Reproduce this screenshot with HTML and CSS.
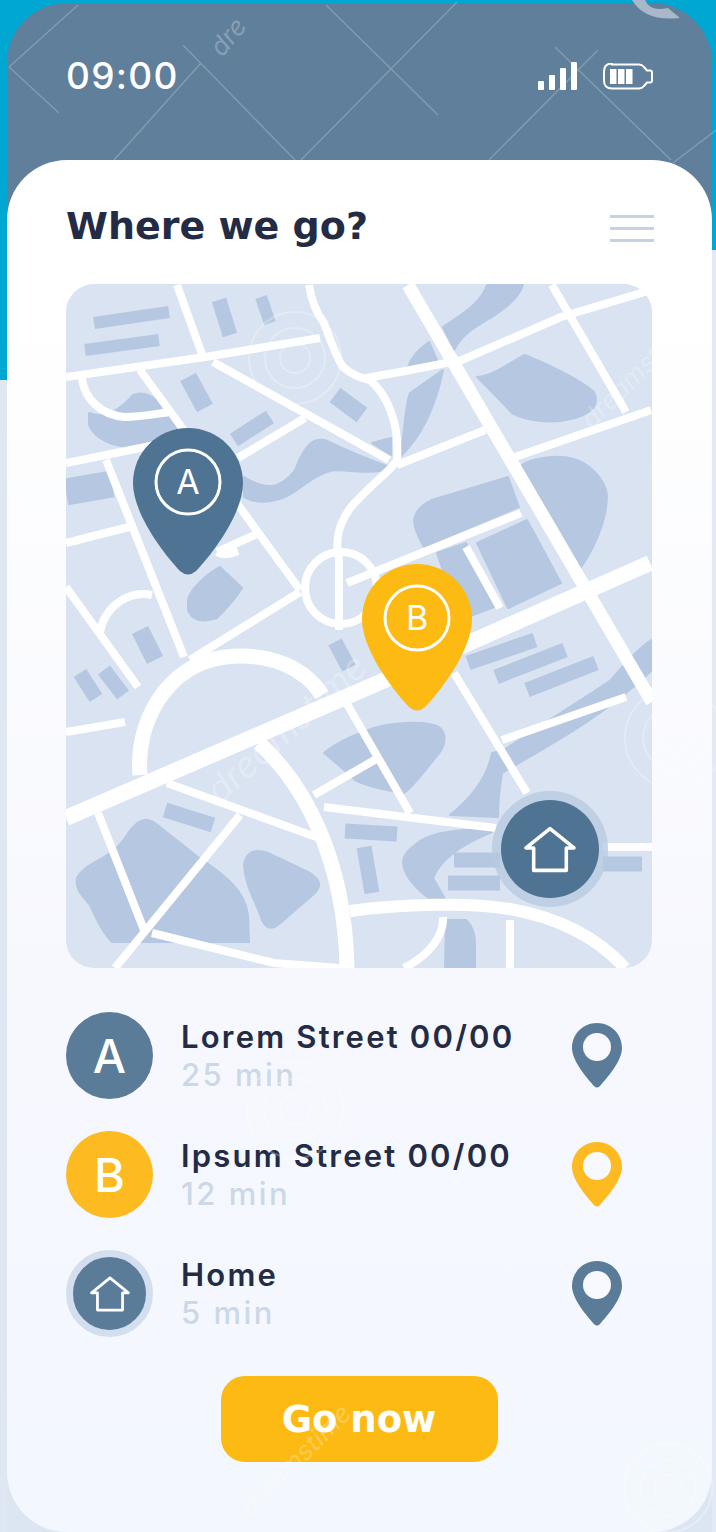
FILE: index.html
```html
<!DOCTYPE html>
<html lang="en">
<head>
    <meta charset="UTF-8">
    <meta name="viewport" content="width=device-width, initial-scale=1.0">
    <title>Where we go?</title>
    <link rel="stylesheet" href="styles.css">
</head>
<body>
    <svg class="sprites" width="0" height="0">
        <symbol id="house" viewBox="0 0 51 45">
            <path d="M25.500 2 2 21h7.500v22h32V21H49z" fill="none" stroke="#fff" stroke-width="3.500" stroke-linejoin="round"/>
        </symbol>
        <symbol id="small-pin" viewBox="0 0 50 65">
            <path d="M25 0C39 0 50 11 50 25 50 38 35 55 28 63Q25 66 22 63C15 55 0 38 0 25 0 11 11 0 25 0z"/>
            <circle cx="25" cy="24" r="14" fill="#f8f9fe"/>
        </symbol>
    </svg>

    <div class="phone">
        <div class="status-bar">
            <span class="time">09:00</span>
            <div class="status-icons">
                <div class="signal">
                    <span class="bar-1"></span>
                    <span class="bar-2"></span>
                    <span class="bar-3"></span>
                    <span class="bar-4"></span>
                </div>
                <svg class="battery" viewBox="0 0 50 27" width="50" height="27">
                    <path d="M9 1.500h27q3 0 5 2.500l3 3.500h3q2 0 2 2v8q0 2-2 2h-3l-3 3.500q-2 2.500-5 2.500H9q-8 0-8-8v-9q0-8 8-8z" fill="none" stroke="#fff" stroke-width="2"/>
                    <path d="M7 6h6.500v15H7zM15 6h6.500v15H15zM23 6h6.500v15H23z" fill="#fff"/>
                </svg>
            </div>
        </div>

        <div class="card">
            <div class="card-header">
                <h1>Where we go?</h1>
                <div class="menu-icon"><span></span><span></span><span></span></div>
            </div>

            <div class="map">
                <svg viewBox="66 284 586 684" width="586" height="684">
                    <g class="shapes">
                        <path d="M89 413C105 420 120 410 133 395 145 390 155 398 160 405L178 428C170 440 150 442 132 447 115 447 95 440 89 425z"/>
                        <path d="M244 477C265 490 280 490 295 470 305 445 312 438 325 440 345 450 370 460 392 468 370 475 350 470 335 470 315 473 300 490 285 497 270 503 255 503 244 497z"/>
                        <path d="M487 285H523C520 295 510 305 495 315 480 325 465 330 454 350L443 327C460 315 480 305 487 285z"/>
                        <path d="M408 367C412 355 420 348 429 342L437 360zM443 370C438 395 428 430 400 457 405 430 405 405 410 393z"/>
                        <path d="M372 443 391 438V455z"/>
                        <path d="M477 377C495 375 510 362 525 355 550 365 580 380 594 392 600 405 592 413 575 418 550 425 525 420 512 413 500 400 490 390 477 377z"/>
                        <path d="M414 520C416 510 422 505 432 500L508 477 519 507 424 547C420 540 414 530 414 520z"/>
                        <path d="M519 467C530 458 555 455 570 458 590 462 605 480 607 495 607 525 590 555 577 573z"/>
                        <path d="M477 543 527 520 561 583 508 608z"/>
                        <path d="M437 553 466 543 494 607 460 620z"/>
                        <path d="M188 600C190 590 205 575 220 567L242 588C235 600 225 610 217 618 205 622 192 622 188 610z"/>
                        <path d="M651 640C630 655 620 670 611 680 590 695 540 725 504 750L492 753C488 775 475 795 450 815L498 817C498 800 500 785 502 773 540 750 600 720 652 670z"/>
                        <path d="M492 832C470 828 430 830 415 845 400 855 400 865 410 880 418 890 425 897 432 899H445L433 878C440 860 460 845 492 832z"/>
                        <path d="M324 753C340 740 360 733 374 728 395 722 430 720 440 728 447 735 445 745 440 752 425 770 415 785 404 793 385 790 365 785 355 780 345 770 335 762 324 753z"/>
                        <path d="M77 878C85 862 110 860 125 838 135 822 145 815 155 823L198 857C225 875 245 890 248 915L249 942H112C100 930 95 915 90 905 82 895 75 890 77 878z"/>
                        <path d="M244 865C246 852 255 848 268 853L310 873C320 880 322 885 315 893L278 925C272 930 265 928 262 920 255 900 245 885 244 865z"/>
                        <path d="M446 920H466C472 925 475 932 475 945V968H445z"/>
                    </g>
                    <g class="lanes">
                        <path stroke-width="12" d="M94 323 169 312M85 350 159 340M261 297 270 323"/>
                        <path stroke-width="15" d="M219 300 230 335M234 440 270 417M80 673 96 698M104 670 123 695M335 642 349 668M468 663 535 640M496 677 565 650M527 690 596 663M165 810 213 825M345 831 397 834M364 847 372 893M454 860H500M448 883H500M603 864H642"/>
                        <path stroke-width="18" d="M188 377 205 408M335 395 362 415M140 630 155 660"/>
                        <path stroke-width="27" d="M66 492 112 484"/>
                    </g>
                    <g class="roads">
                        <g stroke-width="8">
                            <path d="M66 377 205 357 320 338"/>
                            <path d="M177 285 203 357M552 285 626 412M213 362 389 460M140 370 300 590M106 460 184 657"/>
                            <path d="M309 285C312 305 318 315 324 323 332 345 338 360 343 367 352 375 360 378 370 380 385 393 400 420 397 460 392 470 370 485 351 507 338 525 335 540 339 560V630"/>
                            <path d="M651 290 561 317 462 360 400 372 366 378"/>
                            <path d="M397 465 485 430M515 457 651 410M66 463 170 442M238 458 305 418"/>
                            <path d="M347 583 521 513M466 547 500 608M66 543 129 527M217 552 259 533M66 587 138 687M300 592 190 660"/>
                            <path d="M82 378C84 398 100 415 125 417 140 417 155 414 170 412"/>
                            <path d="M100 632C105 605 130 590 152 595"/>
                            <path d="M217 552C224 556 230 554 238 551"/>
                            <circle cx="341" cy="588" r="36"/>
                            <path d="M66 732 125 722M167 783 316 837M324 807 496 828M603 847H652M98 813 144 930M240 815 115 968M152 933 274 963 340 968M343 697 410 813M314 795 378 758M454 673 527 793M502 740 626 697M510 920V968M443 917C444 935 430 955 404 968"/>
                        </g>
                        <path stroke-width="13" d="M408 285 652 702"/>
                        <path stroke-width="16" d="M66 818 385 680 650 563"/>
                        <path stroke-width="15" d="M140 775C135 725 165 665 225 657 270 652 305 668 322 695"/>
                        <path stroke-width="15" d="M259 743C305 785 345 860 347 968"/>
                        <path stroke-width="12" d="M350 911C400 904 470 902 510 909 555 917 595 935 625 968"/>
                    </g>
                    <g class="map-pin">
                        <path fill="#4f7393" d="M188 428C218 428 243 452 243 483 243 512 215 551 196 571Q188 578 180 571C161 551 133 512 133 483 133 452 158 428 188 428z"/>
                        <circle cx="188" cy="482" r="32"/>
                        <text x="188" y="494">A</text>
                    </g>
                    <g class="map-pin" transform="translate(229 136)">
                        <path fill="#fdba13" d="M188 428C218 428 243 452 243 483 243 512 215 551 196 571Q188 578 180 571C161 551 133 512 133 483 133 452 158 428 188 428z"/>
                        <circle cx="188" cy="482" r="32"/>
                        <text x="188" y="494">B</text>
                    </g>
                    <circle cx="550" cy="849" r="58" fill="#b8c9e0" opacity=".8"/>
                    <circle cx="550" cy="849" r="49" fill="#4f7393"/>
                    <use href="#house" x="524" y="826" width="52" height="47"/>
                </svg>
            </div>

            <div class="stops">
                <div class="stop">
                    <div class="badge badge-slate">A</div>
                    <div class="stop-text">
                        <div class="stop-name">Lorem Street 00/00</div>
                        <div class="stop-time">25 min</div>
                    </div>
                    <svg class="stop-pin pin-slate" width="50" height="65"><use href="#small-pin"/></svg>
                </div>
                <div class="stop">
                    <div class="badge badge-yellow">B</div>
                    <div class="stop-text">
                        <div class="stop-name">Ipsum Street 00/00</div>
                        <div class="stop-time">12 min</div>
                    </div>
                    <svg class="stop-pin pin-yellow" width="50" height="65"><use href="#small-pin"/></svg>
                </div>
                <div class="stop">
                    <div class="badge badge-home">
                        <svg width="40" height="40"><use href="#house"/></svg>
                    </div>
                    <div class="stop-text">
                        <div class="stop-name">Home</div>
                        <div class="stop-time">5 min</div>
                    </div>
                    <svg class="stop-pin pin-slate" width="50" height="65"><use href="#small-pin"/></svg>
                </div>
            </div>

            <button class="go-button">Go now</button>
        </div>
    </div>

    <!-- stock photo watermark that sits over the whole shot -->
    <svg class="watermark" viewBox="0 0 716 1532" width="716" height="1532">
        <g class="wm-lines">
            <path d="M9 67 59 113M78 5 9 67M183 45 295 160M114 160 201 63M326 5 438 115M301 160 457 2M555 47 671 160M489 160 598 50M673 163 716 130"/>
        </g>
        <path d="M632 0Q645 22 680 18L668 8Q650 12 645 0z" fill="#a9b8c8"/>
        <g class="wm-spiral">
            <circle cx="295" cy="358" r="46"/><circle cx="295" cy="358" r="30"/><circle cx="295" cy="358" r="15"/>
            <circle cx="295" cy="1110" r="48"/><circle cx="295" cy="1110" r="31"/><circle cx="295" cy="1110" r="15"/>
            <circle cx="675" cy="738" r="50"/><circle cx="675" cy="738" r="32"/><circle cx="675" cy="738" r="15"/>
            <circle cx="668" cy="1488" r="44"/><circle cx="668" cy="1488" r="28"/><circle cx="668" cy="1488" r="13"/>
        </g>
        <text class="wm-text wm-small" transform="translate(222 58) rotate(-50)">dre</text>
        <text class="wm-text" transform="translate(220 805) rotate(-42)">dreamstime</text>
        <text class="wm-text wm-small" transform="translate(592 430) rotate(-45)">dreamstime</text>
        <text class="wm-text wm-small" transform="translate(250 1518) rotate(-45)">dreamstime</text>
    </svg>
</body>
</html>
```

FILE: styles.css
```css
* {
    box-sizing: border-box;
}

body {
    position: relative;
    margin: 0;
    width: 716px;
    height: 1532px;
    overflow: hidden;
    font-family: Inter, "Liberation Sans", sans-serif;
    background:
        linear-gradient(#00a7d2 380px, #dfe7f3 380px) left / 50% 100% no-repeat,
        linear-gradient(#00a7d2 250px, #e3e9f5 250px) right / 50% 100% no-repeat;
}

.sprites {
    display: block;
}

.phone {
    margin: 3px 4px 0 7px;
    height: 1529px;
    border-radius: 60px 60px 0 0;
    background: linear-gradient(#5f7f9b 400px, #dce6f3 400px);
}

.status-bar {
    display: flex;
    justify-content: space-between;
    align-items: center;
    height: 157px;
    padding: 0 59px 12px 59px;
}

.status-bar .time {
    color: #fff;
    font-size: 37px;
    font-weight: 500;
    letter-spacing: 1.3px;
}

.status-icons {
    display: flex;
    align-items: flex-end;
    gap: 26px;
}

.signal {
    display: flex;
    align-items: flex-end;
    gap: 5px;
    height: 28px;
}

.signal span {
    width: 6px;
    background: #fff;
    border-radius: 1px;
}

.signal .bar-1 {
    height: 9px;
}

.signal .bar-2 {
    height: 15px;
}

.signal .bar-3 {
    height: 22px;
}

.signal .bar-4 {
    height: 28px;
}

.card {
    height: 1372px;
    padding: 0 60px 0 59px;
    border-radius: 60px;
    background: linear-gradient(#ffffff 10%, #f7f8fe 60%, #f3f7fe);
}

.card-header {
    display: flex;
    justify-content: space-between;
    align-items: center;
    height: 124px;
    padding-top: 8px;
}

.card-header h1 {
    margin: 0;
    color: #232b45;
    font-family: "DejaVu Sans", sans-serif;
    font-size: 38px;
    font-weight: 700;
}

.menu-icon {
    display: flex;
    flex-direction: column;
    gap: 9px;
    width: 44px;
    margin: 4px -2px 0 0;
}

.menu-icon span {
    height: 3px;
    background: #c5d2e4;
}

.map {
    height: 684px;
    border-radius: 28px;
    overflow: hidden;
    background: #d9e3f2;
}

.map svg {
    display: block;
}

.shapes path {
    fill: #b6c8e1;
    stroke: #b6c8e1;
    stroke-width: 2;
    stroke-linejoin: round;
}

.lanes path {
    fill: none;
    stroke: #b6c8e1;
}

.roads {
    fill: none;
    stroke: #fff;
}

.map-pin circle {
    fill: none;
    stroke: #fff;
    stroke-width: 3;
}

.map-pin text {
    fill: #fff;
    font-size: 34px;
    font-weight: 400;
    text-anchor: middle;
}

.stops {
    display: flex;
    flex-direction: column;
    gap: 32px;
    margin-top: 44px;
}

.stop {
    display: flex;
    align-items: center;
    height: 87px;
}

.badge {
    display: flex;
    justify-content: center;
    align-items: center;
    flex-shrink: 0;
    width: 87px;
    height: 87px;
    border-radius: 50%;
    color: #fff;
    font-size: 47px;
    font-weight: 500;
}

.badge-slate {
    background: #5a7c99;
}

.badge-yellow {
    background: #fdba21;
}

.badge-home {
    background: #5a7c99;
    border: 7px solid #d3deee;
}

.stop-text {
    flex: 1;
    margin-left: 28px;
}

.stop-name {
    color: #232b45;
    font-size: 31px;
    font-weight: 600;
    line-height: 38px;
    letter-spacing: 2.2px;
}

.stop-time {
    color: #ccd8e6;
    font-size: 31px;
    font-weight: 500;
    line-height: 38px;
    letter-spacing: 2.5px;
}

.stop-pin {
    flex-shrink: 0;
    margin-right: 30px;
}

.pin-slate {
    fill: #5a7c99;
}

.pin-yellow {
    fill: #fdba21;
}

.go-button {
    display: block;
    width: 277px;
    height: 86px;
    margin: 39px auto 0;
    border: none;
    border-radius: 24px;
    background: #fdba13;
    color: #fff;
    font-family: "DejaVu Sans", sans-serif;
    font-size: 37px;
    font-weight: 700;
}

.watermark {
    position: absolute;
    top: 0;
    left: 0;
    pointer-events: none;
}

.wm-lines path {
    fill: none;
    stroke: #fff;
    stroke-opacity: 0.22;
    stroke-width: 1.500;
}

.wm-spiral circle {
    fill: none;
    stroke: #fff;
    stroke-opacity: 0.28;
    stroke-width: 2;
}

.wm-text {
    fill: #fff;
    fill-opacity: 0.25;
    font-size: 36px;
    font-style: italic;
}

.wm-small {
    font-size: 26px;
}
```
